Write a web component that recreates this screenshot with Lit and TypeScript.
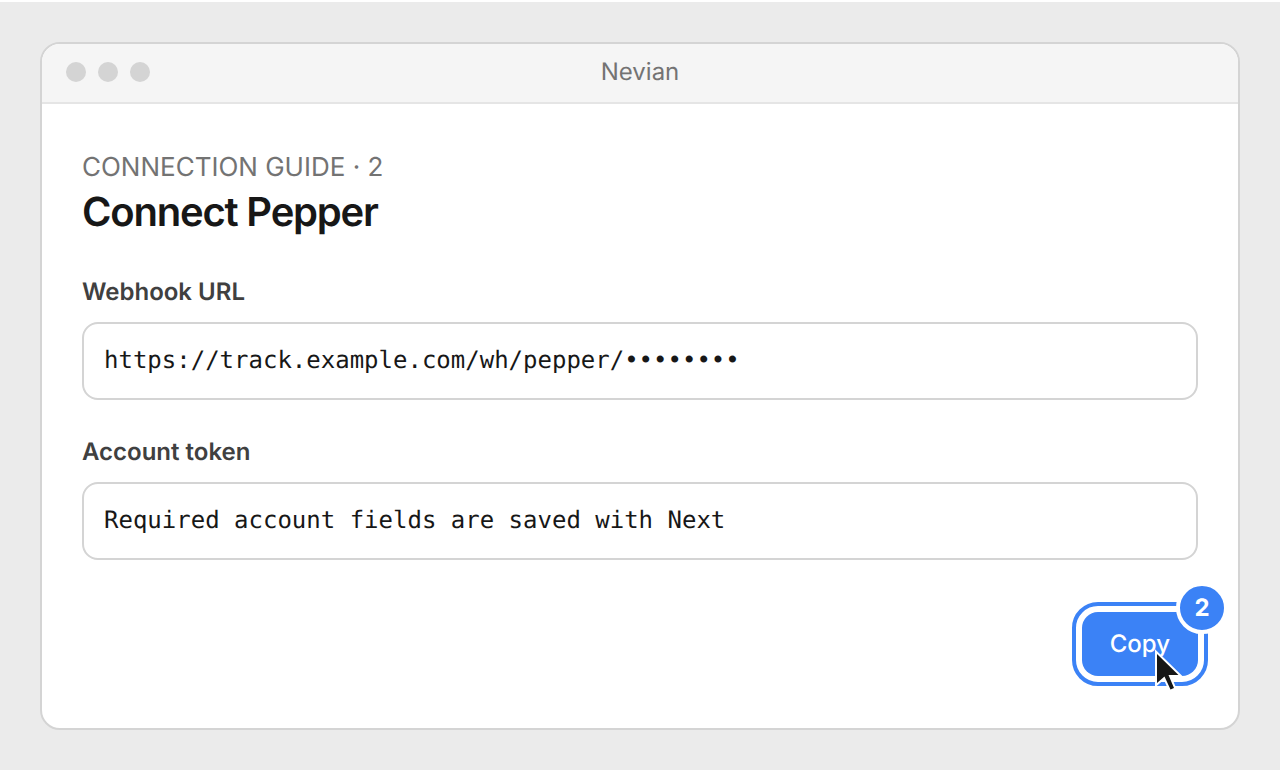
import { LitElement, html, css } from "lit";
import { customElement, property } from "lit/decorators.js";

@customElement("text-field")
class TextField extends LitElement {
  @property() label = "";
  @property() value = "";

  static styles = css`
    :host {
      display: flex;
      flex-direction: column;
      gap: 16px;
    }
    .label {
      font-size: 24px;
      line-height: 28px;
      font-weight: 600;
      color: #404040;
    }
    .input {
      box-sizing: border-box;
      width: 100%;
      height: 78px;
      margin: 0;
      padding: 0 20px 2px;
      border: 2px solid #d4d4d4;
      border-radius: 16px;
      background: #fff;
      color: #171717;
      font: 24px "DejaVu Sans Mono", monospace;
      text-rendering: inherit;
      outline: none;
    }
  `;

  render() {
    return html`
      <label class="label" for="field">${this.label}</label>
      <input class="input" id="field" type="text" readonly .value=${this.value} />
    `;
  }
}

@customElement("app-root")
class AppRoot extends LitElement {
  static styles = css`
    :host {
      display: flex;
      flex-direction: column;
      box-sizing: border-box;
      min-height: 100vh;
      padding: 40px;
      border: solid #fff;
      border-width: 2px 0;
      background: #ebebeb;
      font-family: Inter, sans-serif;
      text-rendering: geometricPrecision;
      color: #171717;
    }
    .window {
      flex: 1;
      display: flex;
      flex-direction: column;
      border: 2px solid #d4d4d4;
      border-radius: 20px;
      background: #fff;
      overflow: hidden;
    }
    .titlebar {
      display: grid;
      grid-template-columns: 1fr auto 1fr;
      align-items: center;
      padding: 14px 24px 16px;
      border-bottom: 2px solid #e5e5e5;
      background: #f5f5f5;
    }
    .dots {
      display: flex;
      gap: 12px;
    }
    .dot {
      width: 20px;
      height: 20px;
      border-radius: 50%;
      background: #d4d4d4;
    }
    .name {
      font-size: 24px;
      line-height: 28px;
      color: #737373;
    }
    .content {
      flex: 1;
      display: flex;
      flex-direction: column;
      padding: 48px 40px 40px;
    }
    .eyebrow {
      margin: 0;
      font-size: 26px;
      line-height: 31px;
      color: #737373;
    }
    .heading {
      margin: 5px 0 42px;
      font-size: 40px;
      line-height: 48px;
      font-weight: 600;
      letter-spacing: -0.03em;
    }
    .fields {
      display: flex;
      flex-direction: column;
      gap: 38px;
    }
    .actions {
      display: flex;
      justify-content: flex-end;
      padding-top: 52px;
    }
    .target {
      position: relative;
      display: flex;
    }
    .copy {
      height: 64px;
      padding: 0 28px 2px;
      border: 0;
      border-radius: 16px;
      background: #3b82f6;
      color: #fff;
      font: 500 24px Inter, sans-serif;
      text-rendering: inherit;
      outline: 4px solid #3b82f6;
      outline-offset: 6px;
    }
    .badge {
      position: absolute;
      top: -30px;
      right: -30px;
      width: 44px;
      border: 4px solid #fff;
      border-radius: 50%;
      background: #3b82f6;
      color: #fff;
      font-size: 24px;
      line-height: 44px;
      font-weight: 700;
      text-align: center;
    }
    .cursor {
      position: absolute;
      right: 12px;
      bottom: -16px;
      width: 32px;
      height: 44px;
    }
  `;

  render() {
    return html`
      <main class="window">
        <header class="titlebar">
          <div class="dots">
            <span class="dot"></span><span class="dot"></span><span class="dot"></span>
          </div>
          <span class="name">Nevian</span>
        </header>
        <section class="content">
          <p class="eyebrow">CONNECTION GUIDE · 2</p>
          <h1 class="heading">Connect Pepper</h1>
          <div class="fields">
            <text-field label="Webhook URL" value="https://track.example.com/wh/pepper/••••••••"></text-field>
            <text-field label="Account token" value="Required account fields are saved with Next"></text-field>
          </div>
          <div class="actions">
            <div class="target">
              <button class="copy" type="button">Copy</button>
              <span class="badge">2</span>
              <svg class="cursor" viewBox="0 0 32 44" aria-hidden="true">
                <path d="M3 6V35L10.5 28.5L16.5 41.5L20 40L14.5 27H24.5Z" fill="#171717" stroke="#fff" stroke-width="4" paint-order="stroke" />
              </svg>
            </div>
          </div>
        </section>
      </main>
    `;
  }
}
